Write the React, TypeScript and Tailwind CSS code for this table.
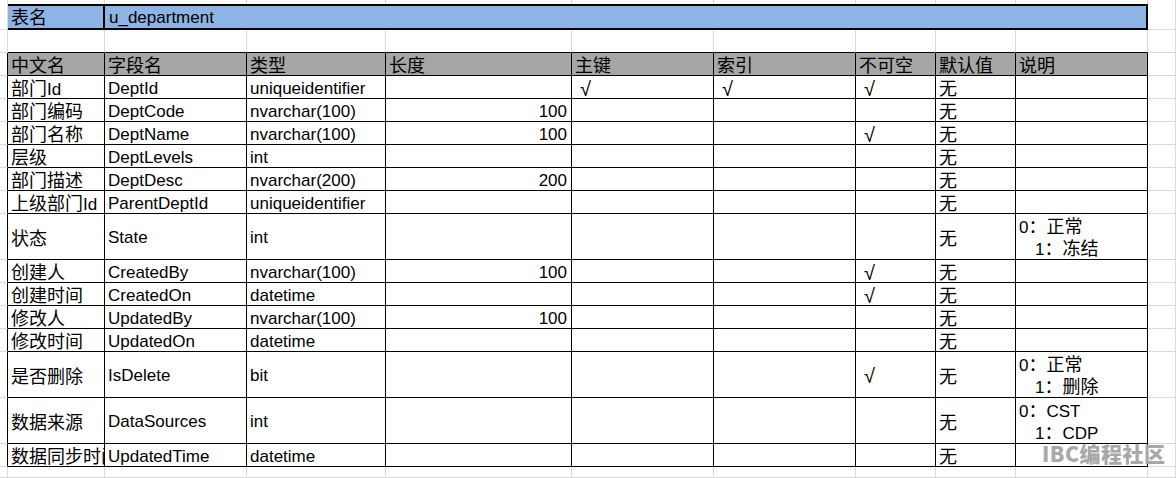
import React from "react";

const cols =
  "grid grid-cols-[8px_97px_142px_139px_186px_142px_142px_80px_80px_132px_1fr]";

type Note = string | string[];

interface Field {
  cn: string;
  name: string;
  type: string;
  len: string;
  pk: boolean;
  idx: boolean;
  notNull: boolean;
  def: string;
  note: Note;
}

const f = (
  cn: string,
  name: string,
  type: string,
  len = "",
  pk = false,
  idx = false,
  notNull = false,
  note: Note = ""
): Field => ({ cn, name, type, len, pk, idx, notNull, def: "无", note });

const fields: Field[] = [
  f("部门Id", "DeptId", "uniqueidentifier", "", true, true, true),
  f("部门编码", "DeptCode", "nvarchar(100)", "100"),
  f("部门名称", "DeptName", "nvarchar(100)", "100", false, false, true),
  f("层级", "DeptLevels", "int"),
  f("部门描述", "DeptDesc", "nvarchar(200)", "200"),
  f("上级部门Id", "ParentDeptId", "uniqueidentifier"),
  f("状态", "State", "int", "", false, false, false, ["0：正常", "1：冻结"]),
  f("创建人", "CreatedBy", "nvarchar(100)", "100", false, false, true),
  f("创建时间", "CreatedOn", "datetime", "", false, false, true),
  f("修改人", "UpdatedBy", "nvarchar(100)", "100"),
  f("修改时间", "UpdatedOn", "datetime"),
  f("是否删除", "IsDelete", "bit", "", false, false, true, ["0：正常", "1：删除"]),
  f("数据来源", "DataSources", "int", "", false, false, false, ["0：CST", "1：CDP"]),
  f("数据同步时间", "UpdatedTime", "datetime"),
];

const headers = ["中文名", "字段名", "类型", "长度", "主键", "索引", "不可空", "默认值", "说明"];

const cjk = /[\u3000-\u9fff\uff00-\uffef]/;

// chinese runs a bit larger than the latin ones, like the sheet font
const Txt = ({ s }: { s: string }) => (
  <span className="leading-[16px]">
    {s.split(/([\u3000-\u9fff\uff00-\uffef]+)/).map((p, i) =>
      cjk.test(p) ? (
        <span key={i} className="font-['Noto_Sans_CJK_SC',sans-serif] text-[18px] leading-[16px]">
          {p}
        </span>
      ) : (
        p
      )
    )}
  </span>
);

// excel gridline cell
const Grid = ({ bottom = true }: { bottom?: boolean }) => (
  <div className={`border-r border-[#dadada] ${bottom ? "border-b" : ""}`} />
);

const Cell = ({
  text = "",
  className = "",
}: {
  text?: string;
  className?: string;
}) => (
  <div
    className={`flex min-h-0 items-center whitespace-nowrap border-r border-b border-black pl-[3px] pt-[3px] ${className}`}
  >
    <Txt s={text} />
  </div>
);

const Check = ({ on }: { on: boolean }) => (
  <div className="flex min-h-0 items-center border-r border-b border-black pl-[8px] pt-[3px] text-[20px] leading-[16px]">
    {on ? "√" : ""}
  </div>
);

const App = () => {
  return (
    <div className="relative h-[478px] w-[1176px] overflow-hidden bg-white text-[17px] leading-none text-black font-['Liberation_Sans','Noto_Sans_CJK_SC',sans-serif]">
      {/* top strip */}
      <div className={`${cols} h-[4px]`}>
        {Array.from({ length: 11 }).map((_, i) => (
          <Grid key={i} bottom={false} />
        ))}
      </div>

      {/* table name */}
      <div className={`${cols} h-[26px]`}>
        <Grid />
        <div className="col-span-9 flex border-y-2 border-r-2 border-black bg-[#8db4e2]">
          <div className="flex w-[97px] items-center border-r-2 border-black pl-[3px] pt-[1px]">
            <Txt s="表名" />
          </div>
          <div className="flex items-center pl-[4px] pt-[1px]">
            <Txt s="u_department" />
          </div>
        </div>
        <Grid />
      </div>

      {/* empty row */}
      <div className={`${cols} h-[23px]`}>
        <Grid />
        {Array.from({ length: 9 }).map((_, i) => (
          <div key={i} className="border-r border-b border-r-[#dadada] border-b-black" />
        ))}
        <Grid />
      </div>

      {/* header */}
      <div className={`${cols} h-[23px]`}>
        <div className="border-r border-b border-r-black border-b-[#dadada]" />
        {headers.map((h) => (
          <Cell key={h} className="bg-[#a6a6a6]" text={h} />
        ))}
        <Grid />
      </div>

      {fields.map((r) => {
        const tall = Array.isArray(r.note);
        return (
          <div key={r.name} className={`${cols} ${tall ? "h-[46px]" : "h-[23px]"}`}>
            <div className="border-r border-b border-r-black border-b-[#dadada]" />
            {/* long names get clipped by the column like in the sheet */}
            <Cell className={r.cn.length > 5 ? "overflow-hidden" : ""} text={r.cn} />
            <Cell text={r.name} />
            <Cell text={r.type} />
            <Cell className="justify-end pr-[4px]" text={r.len} />
            <Check on={r.pk} />
            <Check on={r.idx} />
            <Check on={r.notNull} />
            <Cell text={r.def} />
            {Array.isArray(r.note) ? (
              <div className="flex flex-col whitespace-nowrap border-r border-b border-black pl-[3px]">
                <div className="flex h-[23px] items-center pt-[2px]">
                  <Txt s={r.note[0]} />
                </div>
                <div className="flex h-[22px] items-center pl-[16px] pt-[1px]">
                  <Txt s={r.note[1]} />
                </div>
              </div>
            ) : (
              <Cell />
            )}
            <Grid />
          </div>
        );
      })}

      {/* below the table */}
      <div className={`${cols} h-[11px]`}>
        {Array.from({ length: 11 }).map((_, i) => (
          <Grid key={i} />
        ))}
      </div>

      <div className="absolute left-[1042px] top-[443px] font-['Noto_Sans_CJK_SC',sans-serif] text-[21px] font-black leading-none tracking-[0.5px] text-[#a8a8a8] [text-shadow:0_0_1px_#fff]">
        IBC编程社区
      </div>
    </div>
  );
};

export default App;
